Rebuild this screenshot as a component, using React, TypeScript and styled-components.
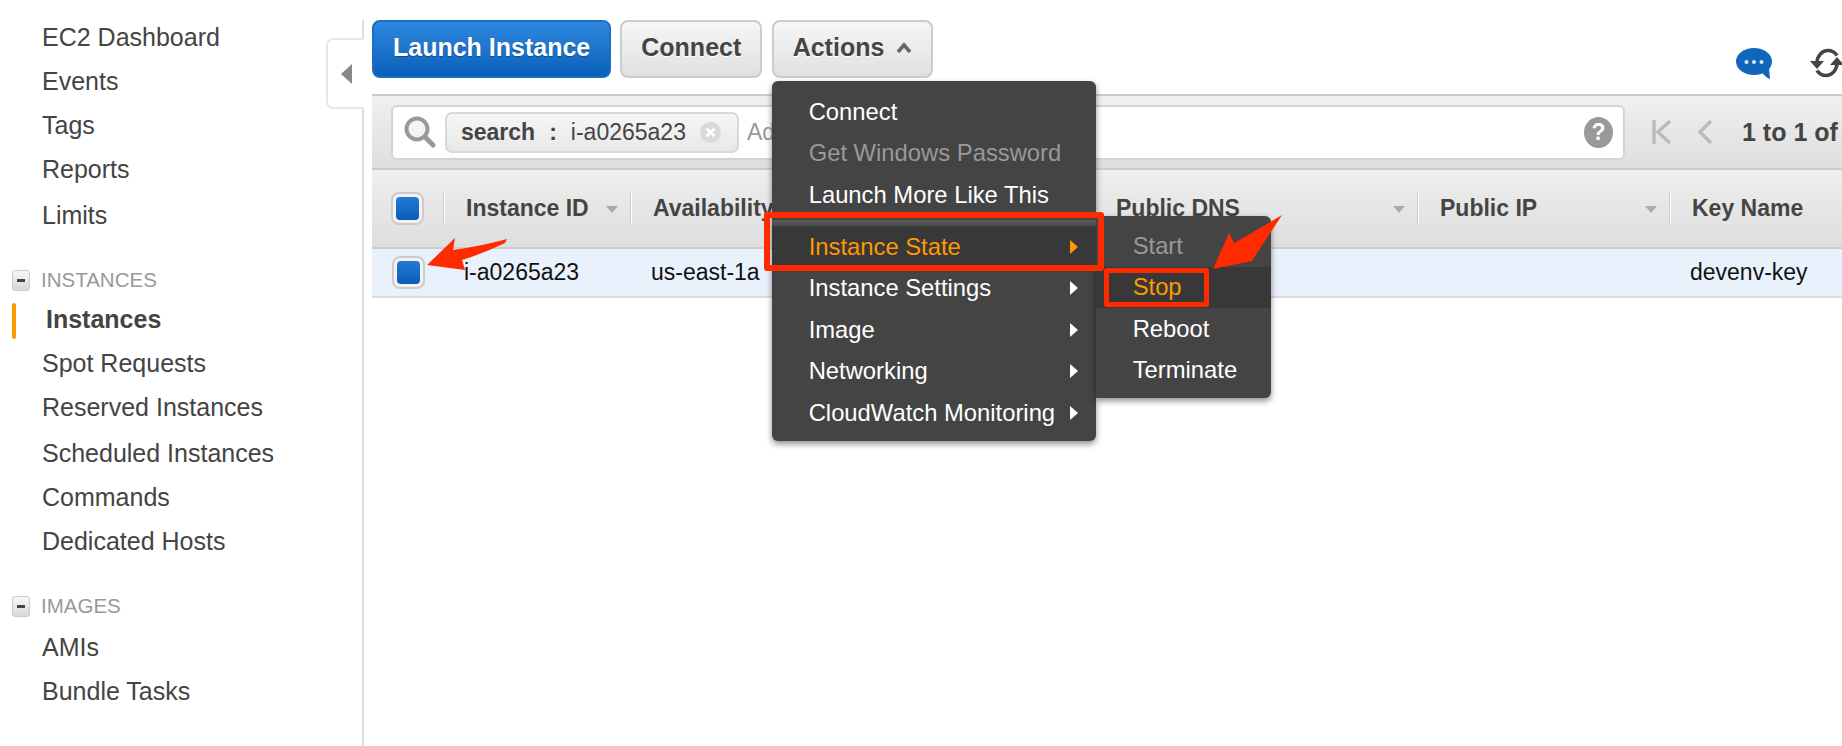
import React from 'react';
import styled, { createGlobalStyle } from 'styled-components';

const GlobalStyle = createGlobalStyle`
  html, body {
    margin: 0;
    height: 100%;
    overflow: hidden;
    background: #fff;
    font-family: "Liberation Sans", Arial, sans-serif;
  }
`;

const COLUMNS = '72px 187px 463px 324px 252px 202px';
const RED = '#ff2a00';

const Page = styled.div`
  display: flex;
  width: 1842px;
  height: 746px;
  overflow: hidden;
`;

const Sidebar = styled.nav`
  position: relative;
  flex: 0 0 365px;
  height: 746px;
  padding-top: 15px;
  box-sizing: border-box;

  &::after {
    content: '';
    position: absolute;
    top: 20px;
    bottom: 0;
    left: 362px;
    width: 2px;
    background: #ddd;
  }
`;

const NavItem = styled.div<{ $nudge?: boolean; $active?: boolean }>`
  position: relative;
  height: 44px;
  line-height: 44px;
  margin-top: ${({ $nudge }) => ($nudge ? '2px' : '0')};
  padding-left: ${({ $active }) => ($active ? '46px' : '42px')};
  font-size: 25px;
  font-weight: ${({ $active }) => ($active ? 700 : 400)};
  color: #444;
  white-space: nowrap;

  ${({ $active }) =>
    $active &&
    `&::before {
      content: '';
      position: absolute;
      left: 12px;
      top: 6px;
      width: 4px;
      height: 36px;
      border-radius: 2px;
      background: #f90;
    }`}
`;

const SectionTitle = styled.div`
  display: flex;
  align-items: center;
  gap: 11px;
  height: 30px;
  margin: 28px 0 2px 12px;
  font-size: 20.5px;
  color: #999;
  white-space: nowrap;
`;

const ImagesTitle = styled(SectionTitle)`
  margin-bottom: 4px;
`;

const Collapse = styled.span`
  display: flex;
  align-items: center;
  justify-content: center;
  width: 16px;
  height: 19px;
  border: 1px solid #ccc;
  border-radius: 3px;
  background: linear-gradient(#f8f8f8, #d8d8d8);

  &::before {
    content: '';
    width: 8px;
    height: 3px;
    background: #444;
  }
`;

const SideTab = styled.div`
  position: absolute;
  z-index: 2;
  top: 38px;
  left: 326px;
  display: flex;
  align-items: center;
  padding-left: 13px;
  width: 38px;
  height: 71px;
  box-sizing: border-box;
  background: #fff;
  border: 2px solid #e8e8e8;
  border-right: none;
  border-radius: 7px 0 0 7px;

  &::before {
    content: '';
    border-style: solid;
    border-width: 10px 11px 10px 0;
    border-color: transparent #888 transparent transparent;
  }
`;

const Main = styled.main`
  flex: 0 0 1500px;
  margin-left: 7px;
  position: relative;
`;

const Toolbar = styled.div`
  display: flex;
  align-items: flex-start;
  gap: 9px;
  height: 94px;
  padding-top: 20px;
  padding-right: 28px;
  box-sizing: border-box;
`;

const Button = styled.button<{ $primary?: boolean }>`
  display: flex;
  align-items: center;
  gap: 12px;
  height: 58px;
  padding: 0 19px 3px;
  box-sizing: border-box;
  font-family: inherit;
  font-size: 25px;
  font-weight: 700;
  border-radius: 8px;
  border: 2px solid ${({ $primary }) => ($primary ? '#1a6fc4' : '#ccc')};
  color: ${({ $primary }) => ($primary ? '#fff' : '#444')};
  background: ${({ $primary }) =>
    $primary ? 'linear-gradient(#2f88e0, #0a60b8)' : 'linear-gradient(#f6f6f6, #e0e0e0)'};
  text-shadow: ${({ $primary }) => ($primary ? '0 1px 1px rgba(0,0,0,.3)' : '0 1px 0 #fff')};
`;

const ActionsWrap = styled.div`
  position: relative;
  margin-left: 0.4px;
`;

const ToolIcons = styled.div`
  display: flex;
  align-items: flex-start;
  gap: 38px;
  margin-left: auto;
  padding-top: 28px;
`;

const Menu = styled.div`
  position: absolute;
  z-index: 5;
  top: 61px;
  left: 0;
  width: 324px;
  height: 360px;
  padding: 10px 0 0;
  box-sizing: border-box;
  background: #444;
  border-radius: 6px;
  box-shadow: 0 3px 6px rgba(0, 0, 0, 0.45);
  font-size: 23.8px;
`;

const MenuItem = styled.div<{ $disabled?: boolean; $hot?: boolean }>`
  display: flex;
  align-items: center;
  justify-content: space-between;
  height: 41.6px;
  padding: 0 18px 0 37px;
  white-space: nowrap;
  color: ${({ $disabled, $hot }) => ($hot ? '#f90' : $disabled ? '#999' : '#fff')};
  background: ${({ $hot }) => ($hot ? '#383838' : 'transparent')};
`;

const MenuSeparator = styled.div`
  height: 6px;
  margin-top: 4px;
  background: linear-gradient(#5a5a5a, #4c4c4c);
`;

const Caret = styled.span<{ $hot?: boolean }>`
  border-style: solid;
  border-width: 7px 0 7px 8px;
  border-color: transparent transparent transparent ${({ $hot }) => ($hot ? '#f90' : '#fff')};
`;

const SubMenu = styled.div`
  position: absolute;
  z-index: -1;
  top: 135px;
  left: 324px;
  width: 175px;
  height: 182px;
  padding-top: 9px;
  box-sizing: border-box;
  background: #444;
  border-radius: 0 6px 6px 0;
  box-shadow: 0 3px 6px rgba(0, 0, 0, 0.45);
`;

const SubItem = styled(MenuItem)`
  height: 41.5px;
  padding-left: 37px;
`;

const Highlight = styled.div<{ $weight: number }>`
  position: absolute;
  box-sizing: border-box;
  border: ${({ $weight }) => $weight}px solid ${RED};
  border-radius: 3px;
`;

const StateBox = styled(Highlight)`
  top: 131px;
  left: -8px;
  width: 340px;
  height: 59px;
`;

const StopBox = styled(Highlight)`
  top: 52px;
  left: 8px;
  width: 105px;
  height: 39px;
`;

const FilterBar = styled.div`
  display: flex;
  align-items: center;
  height: 76px;
  box-sizing: border-box;
  padding-left: 19px;
  border-top: 2px solid #ccc;
  border-bottom: 2px solid #ccc;
  background: linear-gradient(#f0f0f0, #dedede);
`;

const SearchBox = styled.div`
  display: flex;
  align-items: center;
  width: 1234px;
  height: 55px;
  box-sizing: border-box;
  padding: 0 10px 0 11px;
  background: #fff;
  border: 2px solid #d4d4d4;
  border-radius: 6px;
`;

const Token = styled.div`
  display: flex;
  align-items: center;
  width: 294px;
  height: 41px;
  margin-left: 9px;
  padding-left: 14px;
  box-sizing: border-box;
  font-size: 23px;
  color: #444;
  white-space: nowrap;
  background: linear-gradient(#f6f6f6, #e8e8e8);
  border: 2px solid #d8d8d8;
  border-radius: 7px;

  b {
    margin-right: 14px;
  }
`;

const TokenColon = styled.b`
  margin-right: 10px;
`;

const TokenClear = styled.span`
  display: flex;
  align-items: center;
  justify-content: center;
  width: 21px;
  height: 21px;
  margin-left: 14px;
  border-radius: 50%;
  background: #d9d9d9;
`;

const Placeholder = styled.span`
  margin-left: 8px;
  font-size: 23px;
  color: #999;
  white-space: nowrap;
`;

const HelpIcon = styled.span`
  display: flex;
  align-items: center;
  justify-content: center;
  width: 29px;
  height: 31px;
  margin-left: auto;
  border-radius: 50%;
  background: #999;
  color: #fff;
  font-size: 23px;
  font-weight: 700;
`;

const Pager = styled.div`
  display: flex;
  align-items: center;
  margin-left: 27px;
  font-size: 25px;
  font-weight: 700;
  color: #444;
  white-space: nowrap;
`;

const PagerCount = styled.span`
  margin-left: 30px;
`;

const PagerPrev = styled.svg`
  margin-left: 26px;
`;

const HeaderRow = styled.div`
  display: grid;
  grid-template-columns: ${COLUMNS};
  height: 79px;
  box-sizing: border-box;
  border-bottom: 2px solid #ccc;
  background: linear-gradient(#eee, #dedede);
`;

const HeaderCell = styled.div`
  position: relative;
  display: flex;
  align-items: center;
  padding: 0 13px 0 22px;
  font-size: 23px;
  font-weight: 700;
  color: #444;
  white-space: nowrap;

  &::before {
    content: '';
    position: absolute;
    left: -1px;
    top: 22px;
    height: 33px;
    width: 1px;
    background: #ccc;
    border-right: 1px solid #fff;
  }
`;

const SortArrow = styled.span`
  margin-left: auto;
  margin-top: 2px;
  border-style: solid;
  border-width: 7px 6px 0;
  border-color: #aaa transparent transparent;
`;

const CheckCell = styled.div`
  display: flex;
  align-items: center;
  padding-left: 19px;
`;

const BodyRow = styled.div`
  display: grid;
  grid-template-columns: ${COLUMNS};
  align-items: center;
  height: 49px;
  box-sizing: border-box;
  border-bottom: 2px solid #ddd;
  background: #e9f1fd;
  font-size: 23px;
  color: #111;
  white-space: nowrap;
`;

const BodyCell = styled.div`
  padding-left: 20px;
`;

const Check = styled.span`
  display: flex;
  align-items: center;
  justify-content: center;
  width: 33px;
  height: 33px;
  box-sizing: border-box;
  border: 2px solid #ccc;
  border-radius: 8px;
  background: #f2f2f2;

  &::before {
    content: '';
    width: 23px;
    height: 23px;
    border-radius: 4px;
    background: linear-gradient(#227bd8, #0a5cb5);
  }
`;

const RowCheck = styled(Check)`
  margin-left: 1px;
`;

const Arrow = styled.svg`
  position: absolute;
  z-index: 8;
  top: 0;
  left: 0;
  pointer-events: none;
`;

const SearchGlyph = () => (
  <svg width="32" height="32" viewBox="0 0 32 32">
    <circle cx="13" cy="13" r="10.500" fill="#f4f4f4" stroke="#999" strokeWidth="4" />
    <path d="M21 21l8 8" stroke="#999" strokeWidth="5" strokeLinecap="round" />
  </svg>
);

const ChatGlyph = () => (
  <svg width="36" height="31" viewBox="0 0 36 31">
    <ellipse cx="18" cy="13.5" rx="18" ry="13.5" fill="#1166bb" />
    <path d="M25 22l8-2 1 11c-3-1-7-4-9-9z" fill="#1166bb" />
    <circle cx="10.5" cy="14" r="2" fill="#d8e8f8" />
    <circle cx="18" cy="14" r="2" fill="#d8e8f8" />
    <circle cx="25.5" cy="14" r="2" fill="#d8e8f8" />
  </svg>
);

const RefreshGlyph = () => (
  <svg width="34" height="30" viewBox="0 0 34 30" fill="none">
    <path d="M7 15C7 8 12 2.500 18 2.500c4 0 7 2 9 5" stroke="#444" strokeWidth="3.500" />
    <path d="M27 15c0 7-5 12.500-11 12.500-4 0-7-2-9-5" stroke="#444" strokeWidth="3.500" />
    <path d="M0 13h14l-7 8zM20 17h14l-7-8z" fill="#444" />
  </svg>
);

const ChevronUp = () => (
  <svg width="16" height="12" viewBox="0 0 16 12" fill="none">
    <path d="M2 10l6-7 6 7" stroke="#666" strokeWidth="3.500" />
  </svg>
);

const ClearGlyph = () => (
  <svg width="11" height="11" viewBox="0 0 11 11">
    <path d="M1.500 1.500l8 8M9.500 1.500l-8 8" stroke="#fff" strokeWidth="2.500" />
  </svg>
);

const instanceNav = ['Spot Requests', 'Reserved Instances', 'Scheduled Instances', 'Commands', 'Dedicated Hosts'];

const App: React.FC = () => {
  return (
    <Page>
      <GlobalStyle />
      <Sidebar>
        <SideTab />
        <NavItem>EC2 Dashboard</NavItem>
        <NavItem>Events</NavItem>
        <NavItem>Tags</NavItem>
        <NavItem>Reports</NavItem>
        <NavItem $nudge>Limits</NavItem>

        <SectionTitle>
          <Collapse />
          INSTANCES
        </SectionTitle>
        <NavItem $active>Instances</NavItem>
        {instanceNav.map((name) => (
          <NavItem key={name} $nudge={name === 'Scheduled Instances'}>
            {name}
          </NavItem>
        ))}

        <ImagesTitle>
          <Collapse />
          IMAGES
        </ImagesTitle>
        <NavItem>AMIs</NavItem>
        <NavItem>Bundle Tasks</NavItem>

        <SectionTitle>
          <Collapse />
        </SectionTitle>
      </Sidebar>

      <Main>
        <Toolbar>
          <Button $primary>Launch Instance</Button>
          <Button>Connect</Button>
          <ActionsWrap>
            <Button>
              Actions
              <ChevronUp />
            </Button>
            <Menu>
              <MenuItem>Connect</MenuItem>
              <MenuItem $disabled>Get Windows Password</MenuItem>
              <MenuItem>Launch More Like This</MenuItem>
              <MenuSeparator />
              <MenuItem $hot>
                Instance State
                <Caret $hot />
              </MenuItem>
              <MenuItem>
                Instance Settings
                <Caret />
              </MenuItem>
              <MenuItem>
                Image
                <Caret />
              </MenuItem>
              <MenuItem>
                Networking
                <Caret />
              </MenuItem>
              <MenuItem>
                CloudWatch Monitoring
                <Caret />
              </MenuItem>
              <StateBox $weight={6} />
              <SubMenu>
                <SubItem $disabled>Start</SubItem>
                <SubItem $hot>Stop</SubItem>
                <SubItem>Reboot</SubItem>
                <SubItem>Terminate</SubItem>
                <StopBox $weight={5} />
              </SubMenu>
            </Menu>
          </ActionsWrap>
          <ToolIcons>
            <ChatGlyph />
            <RefreshGlyph />
          </ToolIcons>
        </Toolbar>

        <FilterBar>
          <SearchBox>
            <SearchGlyph />
            <Token>
              <b>search</b>
              <TokenColon>:</TokenColon>
              i-a0265a23
              <TokenClear>
                <ClearGlyph />
              </TokenClear>
            </Token>
            <Placeholder>Add filter</Placeholder>
            <HelpIcon>?</HelpIcon>
          </SearchBox>
          <Pager>
            <svg width="20" height="26" viewBox="0 0 20 26" fill="none">
              <path d="M2 1v24M18 2L6 13l12 11" stroke="#bbb" strokeWidth="3.500" />
            </svg>
            <PagerPrev width="14" height="26" viewBox="0 0 14 26" fill="none">
              <path d="M13 2L2 13l11 11" stroke="#bbb" strokeWidth="3.500" />
            </PagerPrev>
            <PagerCount>1 to 1 of 1</PagerCount>
          </Pager>
        </FilterBar>

        <HeaderRow>
          <CheckCell>
            <Check />
          </CheckCell>
          <HeaderCell>
            Instance ID
            <SortArrow />
          </HeaderCell>
          <HeaderCell>
            Availability Zone
            <SortArrow />
          </HeaderCell>
          <HeaderCell>
            Public DNS
            <SortArrow />
          </HeaderCell>
          <HeaderCell>
            Public IP
            <SortArrow />
          </HeaderCell>
          <HeaderCell>
            Key Name
            <SortArrow />
          </HeaderCell>
        </HeaderRow>

        <BodyRow>
          <CheckCell>
            <RowCheck />
          </CheckCell>
          <BodyCell>i-a0265a23</BodyCell>
          <BodyCell>us-east-1a</BodyCell>
          <BodyCell />
          <BodyCell />
          <BodyCell>devenv-key</BodyCell>
        </BodyRow>

        <Arrow width="1470" height="300">
          <path d="M55 265L83 238L81 250Q110 246 135 239L133 243Q110 254 90 260L93 270Z" fill={RED} />
          <path d="M841 269L857 233L862 243Q885 230 910 215Q895 238 880 261Z" fill={RED} />
        </Arrow>
      </Main>
    </Page>
  );
};

export default App;
